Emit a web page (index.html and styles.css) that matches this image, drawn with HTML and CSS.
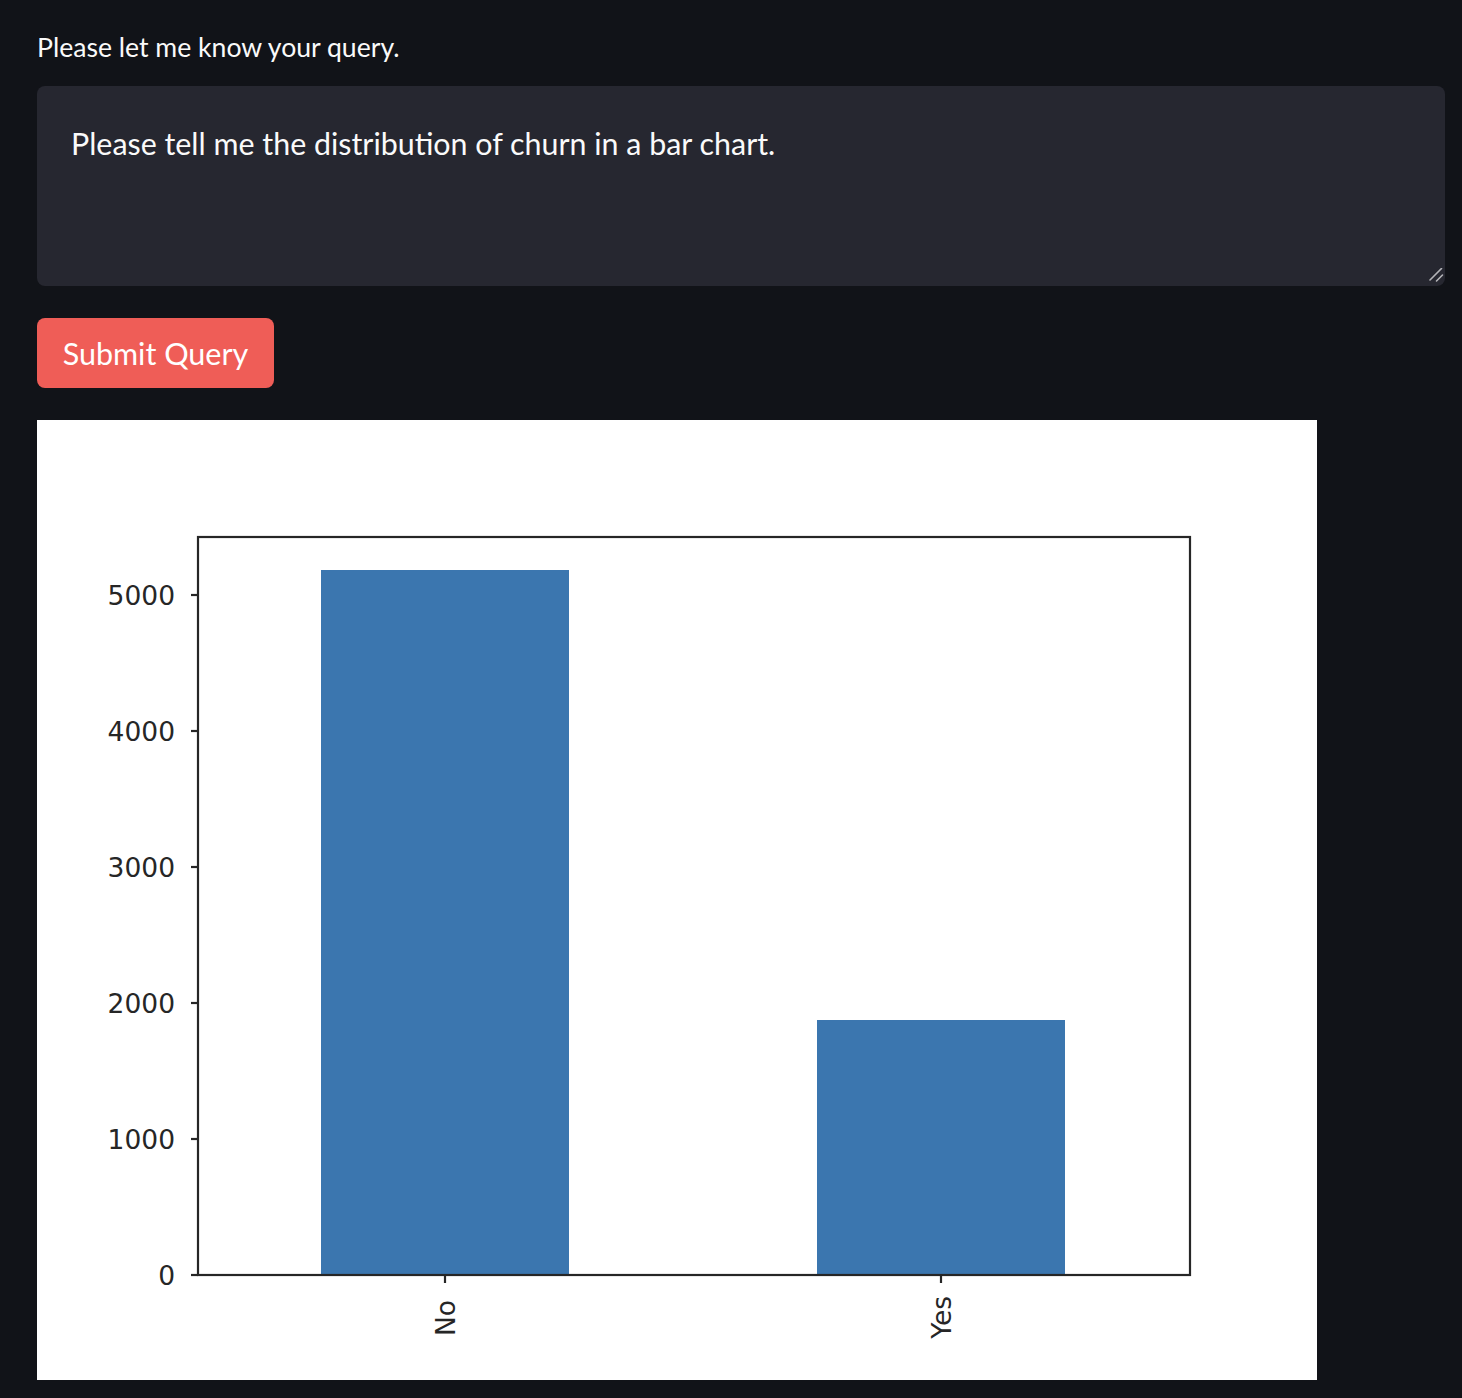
FILE: index.html
```html
<!DOCTYPE html>
<html>
<head>
<meta charset="utf-8">
<link rel="stylesheet" href="styles.css">
</head>
<body>
<main class="app">
  <label class="label" for="q">Please let me know your query.</label>
  <div class="query-wrap">
    <textarea id="q" class="query">Please tell me the distribution of churn in a bar chart.</textarea>
    <svg class="grip" width="16" height="16" viewBox="0 0 16 16" xmlns="http://www.w3.org/2000/svg">
      <line x1="13.5" y1="0.5" x2="2" y2="12" stroke="#b4b4b8" stroke-width="1.6" stroke-linecap="round"/>
      <line x1="14.5" y1="7" x2="8.5" y2="13" stroke="#b4b4b8" stroke-width="1.6" stroke-linecap="round"/>
    </svg>
  </div>
  <button class="submit">Submit Query</button>
  <figure class="chart">
    <svg width="1280" height="960" viewBox="0 0 1280 960" xmlns="http://www.w3.org/2000/svg">
      <rect x="284" y="150" width="248" height="705" fill="#3b76af"/>
      <rect x="780" y="600" width="248" height="255" fill="#3b76af"/>
      <rect x="161" y="117" width="992" height="738" fill="none" stroke="#262626" stroke-width="2.2"/>
      <g stroke="#262626" stroke-width="2.2">
        <line x1="154" y1="855" x2="161" y2="855"/>
        <line x1="154" y1="719" x2="161" y2="719"/>
        <line x1="154" y1="583" x2="161" y2="583"/>
        <line x1="154" y1="447" x2="161" y2="447"/>
        <line x1="154" y1="311" x2="161" y2="311"/>
        <line x1="154" y1="175" x2="161" y2="175"/>
        <line x1="408" y1="855" x2="408" y2="863"/>
        <line x1="904" y1="855" x2="904" y2="863"/>
      </g>
      <g class="tick" text-anchor="end">
        <text x="138" y="865">0</text>
        <text x="138" y="729">1000</text>
        <text x="138" y="593">2000</text>
        <text x="138" y="457">3000</text>
        <text x="138" y="321">4000</text>
        <text x="138" y="185">5000</text>
      </g>
      <g class="tick" text-anchor="end">
        <text transform="translate(418 880) rotate(-90)">No</text>
        <text transform="translate(914 876) rotate(-90)">Yes</text>
      </g>
    </svg>
  </figure>
</main>
</body>
</html>
```
FILE: styles.css
```css
html, body {
  margin: 0;
  padding: 0;
  background: #111318;
}
.app {
  display: flex;
  flex-direction: column;
  align-items: flex-start;
  padding: 30px 17px 0 37px;
  font-family: "Lato", "Open Sans", sans-serif;
  color: #fafafa;
}
.label {
  font-size: 26.6px;
  line-height: 34px;
  height: 34px;
  margin-bottom: 22px;
}
.query-wrap {
  position: relative;
  width: 1408px;
  height: 200px;
}
.query {
  display: block;
  box-sizing: border-box;
  width: 1408px;
  height: 200px;
  margin: 0;
  padding: 37px 34px;
  background: #262730;
  color: #fafafa;
  border: none;
  border-radius: 8px;
  font-family: "Lato", "Open Sans", sans-serif;
  font-size: 30.4px;
  line-height: 40px;
  outline: none;
  resize: none;
}
.grip {
  position: absolute;
  right: 1px;
  bottom: 2px;
  pointer-events: none;
}
.submit {
  margin: 32px 0 0;
  width: 237px;
  height: 70px;
  padding: 0;
  border: none;
  border-radius: 8px;
  background: #ef5d57;
  color: #ffffff;
  font-family: "Lato", "Open Sans", sans-serif;
  font-size: 30.5px;
}
.chart {
  margin: 32px 0 0;
  width: 1280px;
  height: 960px;
  background: #ffffff;
}
.chart svg {
  display: block;
}
.tick {
  font-family: "DejaVu Sans", sans-serif;
  font-size: 26.5px;
  fill: #262626;
}
```
